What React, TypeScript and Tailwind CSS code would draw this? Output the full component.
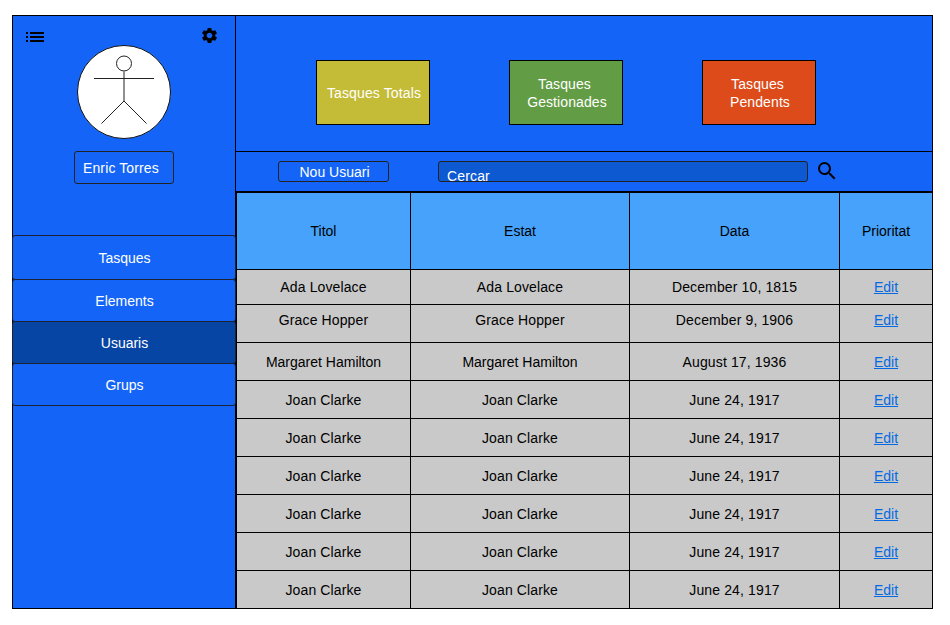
import React from "react";
import { MdList, MdSettings, MdSearch } from "react-icons/md";

const navItems = [
  { label: "Tasques", className: "h-[45px]" },
  { label: "Elements", className: "-mt-px h-[43px]" },
  { label: "Usuaris", className: "-mt-px h-[43px] bg-[#0745a5]" },
  { label: "Grups", className: "-mt-px h-[43px]" },
];

const joan = { name: "Joan Clarke", date: "June 24, 1917", className: "h-[38px]", nameClass: "tracking-[0.12px]" };
const rows = [
  { name: "Ada Lovelace", date: "December 10, 1815", className: "h-[35px] pb-[2px]", nameClass: "tracking-[0.12px]" },
  { name: "Grace Hopper", date: "December 9, 1906", className: "h-[38px] pb-[8px]", nameClass: "tracking-[0.12px]" },
  { name: "Margaret Hamilton", date: "August 17, 1936", className: "h-[38px]", nameClass: "tracking-normal" },
  joan,
  joan,
  joan,
  joan,
  joan,
  joan,
];

function Avatar() {
  return (
    <svg width="94" height="94" viewBox="0 0 94 94" fill="none" stroke="#222" strokeWidth="1">
      <circle cx="47" cy="47" r="46.5" fill="#fff" stroke="#111" />
      <circle cx="47" cy="18.5" r="7.5" />
      <path d="M47 26.5V56M17 33.5H77M47 56L24.5 78.5M47 56L69.5 78.5" />
    </svg>
  );
}

function Sidebar() {
  return (
    <aside className="flex w-[223px] shrink-0 flex-col border-r border-black">
      <div className="flex h-[219px] flex-col">
        <div className="flex h-[29px] items-start justify-between pl-[10px] pr-[16px]">
          <MdList className="mt-[9px] shrink-0 text-black" size={24} />
          <MdSettings className="mt-[10px] shrink-0 text-black" size={19} />
        </div>
        <div className="ml-[64px] h-[94px]">
          <Avatar />
        </div>
        <div className="ml-[61px] mt-[12px] flex h-[33px] w-[100px] items-center rounded-[3px] border border-[#222] pl-[8px] tracking-[0.12px]">
          Enric Torres
        </div>
      </div>
      <nav className="-ml-px -mr-px flex flex-col">
        {navItems.map((item) => (
          <button
            key={item.label}
            className={`flex items-center justify-center rounded-[3px] border border-[#1a2233] pl-[1px] ${item.className}`}
          >
            {item.label}
          </button>
        ))}
      </nav>
    </aside>
  );
}

function Table() {
  return (
    <div className="flex flex-col border-l border-t border-black text-black">
      <div className="grid h-[77px] grid-cols-[174px_219px_210px_92px] divide-x divide-black border-b border-black bg-[#46a2fa] text-center leading-[76px]">
        <div>Titol</div>
        <div>Estat</div>
        <div>Data</div>
        <div>Prioritat</div>
      </div>
      {rows.map((row, i) => (
        <div key={i} className="border-b border-black bg-[#c9c9c9] last:border-b-0">
          <div className="grid grid-cols-[174px_219px_210px_92px] divide-x divide-black">
            <div className={`-mb-px flex items-center justify-center ${row.className} ${row.nameClass}`}>
              {row.name}
            </div>
            <div className={`-mb-px flex items-center justify-center ${row.className} ${row.nameClass}`}>
              {row.name}
            </div>
            <div className={`-mb-px flex items-center justify-center tracking-[0.13px] ${row.className}`}>
              {row.date}
            </div>
            <div className={`-mb-px flex items-center justify-center ${row.className}`}>
              <a className="text-[#0469e3] underline">Edit</a>
            </div>
          </div>
        </div>
      ))}
    </div>
  );
}

export default function App() {
  return (
    <div className="h-[625px] w-[950px] bg-white pl-[12px] pt-[15px] font-['Liberation_Sans',Arial,sans-serif] text-[14px] leading-[18px] text-white">
      <div className="flex h-[594px] w-[921px] border border-black bg-[#1465f7]">
        <Sidebar />
        <main className="flex min-w-0 grow flex-col">
          <section className="flex h-[136px] gap-[79px] border-b border-black pl-[80px] pt-[44px]">
            <div className="flex h-[65px] w-[114px] items-center justify-center whitespace-nowrap border border-black bg-[#c4bb36] pl-[2px] tracking-[0.12px]">
              Tasques Totals
            </div>
            <div className="flex h-[65px] w-[114px] flex-col items-center justify-center border border-black bg-[#629c44]">
              <span className="mr-[3px] tracking-[0.1px]">Tasques</span>
              <span className="ml-[2px] tracking-[0.1px]">Gestionades</span>
            </div>
            <div className="flex h-[65px] w-[114px] flex-col items-center justify-center border border-black bg-[#dc4b19]">
              <span className="mr-[3px] tracking-[0.1px]">Tasques</span>
              <span className="ml-[2px] tracking-[0.1px]">Pendents</span>
            </div>
          </section>
          <section className="flex h-[40px] items-start border-b border-black pl-[42px] pt-[9px]">
            <button className="flex h-[21px] w-[111px] items-center justify-center rounded-[3px] border border-[#222] pl-[2px]">
              Nou Usuari
            </button>
            <div className="ml-[49px] h-[21px] w-[370px] rounded-[3px] border border-[#222] bg-[#0d59d1] pl-[8px] pt-[5px] tracking-[0.15px]">
              Cercar
            </div>
            <MdSearch className="-mt-[2px] ml-[7px] shrink-0 text-black" size={24} />
          </section>
          <Table />
        </main>
      </div>
    </div>
  );
}
